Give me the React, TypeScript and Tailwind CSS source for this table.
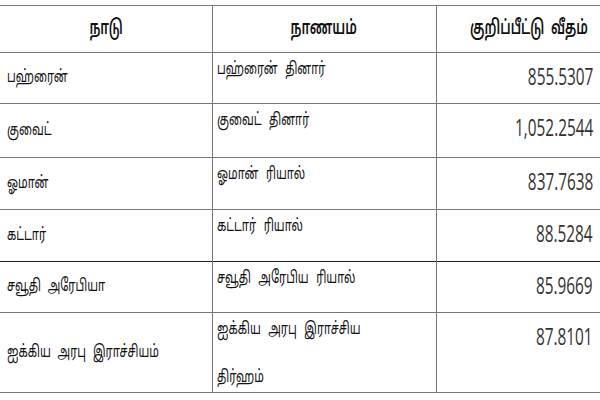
import React from "react";

const rows: { c: string; cur: string[]; rate: string; h: string; dark?: boolean }[] = [
  { c: "பஹ்ரைன்", cur: ["பஹ்ரைன் தினார்"], rate: "855.5307", h: "h-[51px]" },
  { c: "குவைட்", cur: ["குவைட் தினார்"], rate: "1,052.2544", h: "h-[54px]" },
  { c: "ஓமான்", cur: ["ஓமான் ரியால்"], rate: "837.7638", h: "h-[52px]" },
  { c: "கட்டார்", cur: ["கட்டார் ரியால்"], rate: "88.5284", h: "h-[52px]" },
  { c: "சவூதி அரேபியா", cur: ["சவூதி அரேபிய ரியால்"], rate: "85.9669", h: "h-[51px]", dark: true },
  { c: "ஐக்கிய அரபு இராச்சியம்", cur: ["ஐக்கிய அரபு இராச்சிய", "திர்ஹம்"], rate: "87.8101", h: "h-[80px]" },
];

const tamil = "font-['Noto_Sans_Tamil','Lohit_Tamil','Latha','Noto_Sans',sans-serif]";
const num = "font-['Open_Sans','Liberation_Sans',sans-serif]";

function Head({ children }: { children: React.ReactNode }) {
  return (
    <span className="inline-block origin-center scale-x-[0.64] whitespace-nowrap leading-[22px] [word-spacing:5px]">
      {children}
    </span>
  );
}

export default function App() {
  return (
    <div className="w-[600px] h-[400px] bg-white pt-[5px] overflow-hidden">
      <table className="w-[600px] table-fixed border-collapse text-[#111]">
        <colgroup>
          <col className="w-[212px]" />
          <col className="w-[224px]" />
          <col className="w-[164px]" />
        </colgroup>
        <tbody>
          <tr className="h-[47px]">
            <td className={`border-t border-[#777] p-0 text-center align-middle ${tamil} text-[20px] font-semibold`}>
              <Head>நாடு</Head>
            </td>
            <td className={`border-t border-l border-[#777] p-0 text-center align-middle ${tamil} text-[20px] font-semibold`}>
              <Head>நாணயம்</Head>
            </td>
            <td className={`border-t border-l border-[#777] p-0 text-center align-middle ${tamil} text-[20px] font-semibold`}>
              <Head>குறிப்பீட்டு வீதம்</Head>
            </td>
          </tr>
          {rows.map((r) => (
            <tr key={r.rate} className={r.h}>
              <td
                className={`border-t ${r.dark ? "border-[#222]" : "border-[#777]"} p-0 pl-[7px] align-middle ${tamil} text-[17px]`}
              >
                <span className="inline-block origin-left scale-x-[0.66] whitespace-nowrap [word-spacing:6px]">{r.c}</span>
              </td>
              <td
                className={`border-t border-l border-[#777] ${r.dark ? "border-t-[#222]" : ""} p-0 pl-[4px] pt-[6px] align-top ${tamil} text-[17px]`}
              >
                <div className="flex flex-col gap-[26px] leading-[22px]">
                  {r.cur.map((l) => (
                    <span key={l} className="inline-block origin-left scale-x-[0.66] whitespace-nowrap [word-spacing:7px]">
                      {l}
                    </span>
                  ))}
                </div>
              </td>
              <td
                className={`border-t border-l border-[#777] ${r.dark ? "border-t-[#222]" : ""} p-0 pr-[7px] pt-[5px] align-top text-right ${num} text-[24px] text-[#333]`}
              >
                <span className="inline-block origin-right scale-x-[0.64] leading-[24px]">{r.rate}</span>
              </td>
            </tr>
          ))}
          <tr className="h-0">
            <td className="border-t border-[#777] p-0" />
            <td className="border-t border-[#777] p-0" />
            <td className="border-t border-[#777] p-0" />
          </tr>
        </tbody>
      </table>
    </div>
  );
}
